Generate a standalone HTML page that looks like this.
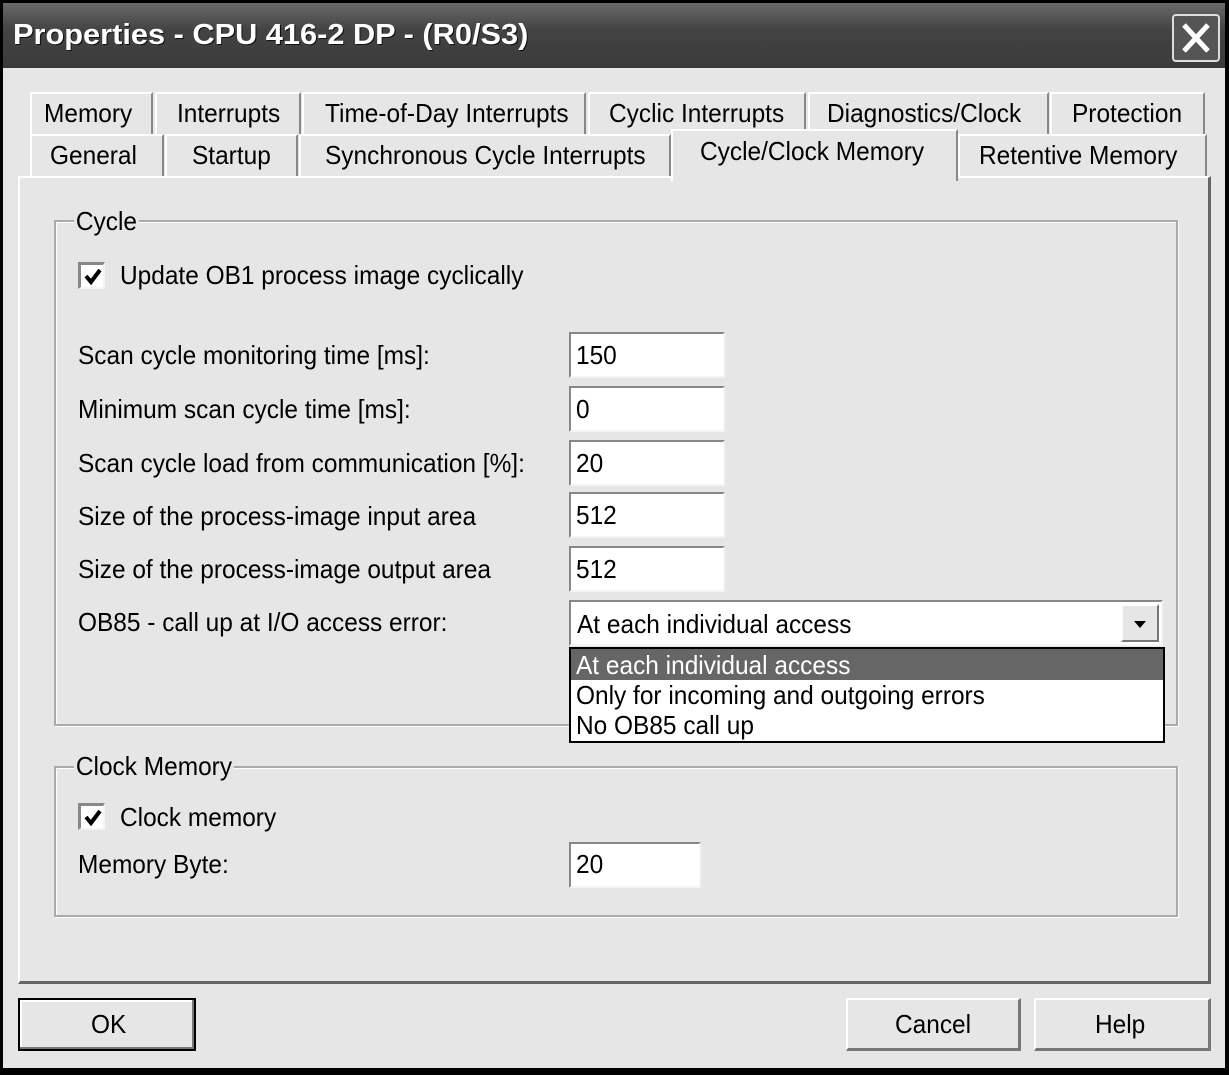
<!DOCTYPE html>
<html><head><meta charset="utf-8"><style>
*{margin:0;padding:0;box-sizing:border-box}
body{width:1229px;height:1075px;background:#000;overflow:hidden;font-family:"Liberation Sans",sans-serif;color:#000}
.win{position:absolute;left:3px;top:3px;width:1222px;height:1065px;background:#e6e6e6}
.title{position:absolute;left:0;top:0;width:1222px;height:65px;background:linear-gradient(#6a6a6a,#444 40%,#3a3a3a);}
.title span{position:absolute;left:10px;top:16px;color:#fff;font-weight:bold;font-size:29px;transform:scaleX(1.06);transform-origin:left;white-space:nowrap;text-shadow:1px 1px 0 #111}
.close{position:absolute;left:1169px;top:11px;width:48px;height:48px;border:2px solid #ddd;border-radius:4px;background:#555}
.t{position:absolute;font-size:26px;white-space:nowrap;transform:scaleX(.94);transform-origin:left center;line-height:30px}
.tab{position:absolute;background:#e6e6e6;border-top:2px solid #fff;border-left:2px solid #fff;border-right:2px solid #888;height:44px}
.panel{position:absolute;left:15px;top:173px;width:1193px;height:808px;border-top:2px solid #fff;border-left:2px solid #fff;border-right:3px solid #666;border-bottom:3px solid #666}
.grp{position:absolute;border:2px solid #aaa;box-shadow:inset 1px 1px 0 #fff,1px 1px 0 #fff}
.lbl{background:#e6e6e6;padding:0 2px}
.inp{position:absolute;background:#fff;border-top:2px solid #888;border-left:2px solid #888;border-right:2px solid #f4f4f4;border-bottom:2px solid #f4f4f4}
.cb{position:absolute;width:27px;height:27px;background:#fff;border-top:3px solid #888;border-left:3px solid #888;border-right:2px solid #f4f4f4;border-bottom:2px solid #f4f4f4}
.btn{position:absolute;top:995px;height:53px;background:#e6e6e6;border-top:2px solid #fff;border-left:2px solid #fff;border-right:3px solid #777;border-bottom:3px solid #777}
</style></head><body>
<div class="win">
<div class="title"><span>Properties - CPU 416-2 DP - (R0/S3)</span>
<div class="close"><svg width="44" height="44" viewBox="0 0 44 44"><path d="M10 9 L34 35 M34 9 L10 35" stroke="#fff" stroke-width="5"/></svg></div></div>

<div class="tab" style="left:27px;top:89px;width:123px"></div><div class="t" style="left:41px;top:95px">Memory</div>
<div class="tab" style="left:152px;top:89px;width:146px"></div><div class="t" style="left:174px;top:95px">Interrupts</div>
<div class="tab" style="left:299px;top:89px;width:284px"></div><div class="t" style="left:322px;top:95px">Time-of-Day Interrupts</div>
<div class="tab" style="left:585px;top:89px;width:218px"></div><div class="t" style="left:606px;top:95px">Cyclic Interrupts</div>
<div class="tab" style="left:805px;top:89px;width:241px"></div><div class="t" style="left:824px;top:95px">Diagnostics/Clock</div>
<div class="tab" style="left:1047px;top:89px;width:155px"></div><div class="t" style="left:1069px;top:95px">Protection</div>

<div class="tab" style="left:27px;top:131px;width:134px"></div><div class="t" style="left:47px;top:137px">General</div>
<div class="tab" style="left:162px;top:131px;width:133px"></div><div class="t" style="left:189px;top:137px">Startup</div>
<div class="tab" style="left:296px;top:131px;width:372px"></div><div class="t" style="left:322px;top:137px">Synchronous Cycle Interrupts</div>
<div class="tab" style="left:955px;top:131px;width:249px"></div><div class="t" style="left:976px;top:137px">Retentive Memory</div>
<div class="panel"></div>
<div class="tab" style="left:668px;top:126px;width:287px;height:52px;border-bottom:none"></div><div class="t" style="left:697px;top:133px">Cycle/Clock Memory</div>

<div class="grp" style="left:51px;top:217px;width:1124px;height:506px"></div>
<div class="t" style="left:71px;top:203px"><span class="lbl">Cycle</span></div>
<div class="cb" style="left:75px;top:259px"><svg width="22" height="22" style="position:absolute;left:1px;top:1px"><path d="M4 10 L9 16 L18 4" stroke="#000" stroke-width="4" fill="none"/></svg></div>
<div class="t" style="left:117px;top:257px">Update OB1 process image cyclically</div>

<div class="t" style="left:75px;top:337px">Scan cycle monitoring time [ms]:</div>
<div class="t" style="left:75px;top:391px">Minimum scan cycle time [ms]:</div>
<div class="t" style="left:75px;top:445px">Scan cycle load from communication [%]:</div>
<div class="t" style="left:75px;top:498px">Size of the process-image input area</div>
<div class="t" style="left:75px;top:551px">Size of the process-image output area</div>
<div class="t" style="left:75px;top:604px">OB85 - call up at I/O access error:</div>

<div class="inp" style="left:566px;top:329px;width:156px;height:46px"></div><div class="t" style="left:573px;top:337px">150</div>
<div class="inp" style="left:566px;top:383px;width:156px;height:46px"></div><div class="t" style="left:573px;top:391px">0</div>
<div class="inp" style="left:566px;top:437px;width:156px;height:46px"></div><div class="t" style="left:573px;top:445px">20</div>
<div class="inp" style="left:566px;top:489px;width:156px;height:46px"></div><div class="t" style="left:573px;top:497px">512</div>
<div class="inp" style="left:566px;top:543px;width:156px;height:46px"></div><div class="t" style="left:573px;top:551px">512</div>

<div class="inp" style="left:566px;top:597px;width:594px;height:46px"></div><div class="t" style="left:574px;top:606px">At each individual access</div>
<div style="position:absolute;left:1118px;top:601px;width:38px;height:38px;background:#e6e6e6;border-top:2px solid #fff;border-left:2px solid #fff;border-right:2px solid #777;border-bottom:2px solid #777"><svg width="34" height="34"><path d="M11 15 L23 15 L17 22 Z" fill="#000"/></svg></div>

<div style="position:absolute;left:566px;top:644px;width:596px;height:96px;background:#fff;border:2px solid #000"></div>
<div style="position:absolute;left:568px;top:646px;width:592px;height:31px;background:#666"></div>
<div class="t" style="left:573px;top:647px;color:#fff">At each individual access</div>
<div class="t" style="left:573px;top:677px">Only for incoming and outgoing errors</div>
<div class="t" style="left:573px;top:707px">No OB85 call up</div>

<div class="grp" style="left:51px;top:763px;width:1124px;height:151px"></div>
<div class="t" style="left:71px;top:748px"><span class="lbl">Clock Memory</span></div>
<div class="cb" style="left:75px;top:800px"><svg width="22" height="22" style="position:absolute;left:1px;top:1px"><path d="M4 10 L9 16 L18 4" stroke="#000" stroke-width="4" fill="none"/></svg></div>
<div class="t" style="left:117px;top:799px">Clock memory</div>
<div class="t" style="left:75px;top:846px">Memory Byte:</div>
<div class="inp" style="left:566px;top:839px;width:132px;height:46px"></div><div class="t" style="left:573px;top:846px">20</div>

<div class="btn" style="left:15px;width:178px;border:2px solid #000;box-shadow:inset -2px -2px 0 #777,inset 2px 2px 0 #fff"></div><div class="t" style="left:88px;top:1006px">OK</div>
<div class="btn" style="left:843px;width:175px"></div><div class="t" style="left:892px;top:1006px">Cancel</div>
<div class="btn" style="left:1031px;width:177px"></div><div class="t" style="left:1092px;top:1006px">Help</div>
</div>
</body></html>
